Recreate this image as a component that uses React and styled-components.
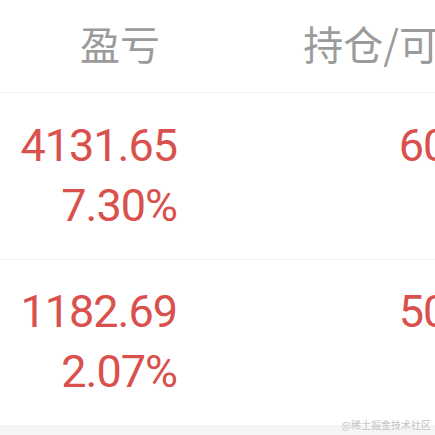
import React from 'react';
import styled, { createGlobalStyle } from 'styled-components';

const GlobalStyle = createGlobalStyle`
    html, body {
        margin: 0;
        padding: 0;
        background: #ffffff;
    }
    body {
        width: 435px;
        height: 435px;
        overflow: hidden;
    }
`;

const Page = styled.div`
    position: relative;
    width: 435px;
    height: 435px;
    overflow: hidden;
    background: #ffffff;
`;

const Table = styled.div`
    width: 520px;
`;

const HeaderRow = styled.div`
    display: grid;
    grid-template-columns: 177px 319px;
    height: 92px;
    align-items: center;
    border-bottom: 1px solid #f0f0f0;
`;

const HeaderCell = styled.div`
    text-align: right;
    padding: 0 17px 6px 0;
    font-family: "Noto Sans CJK SC", "Noto Sans", sans-serif;
    font-size: 40px;
    line-height: 1;
    color: #9b9b9b;
    white-space: nowrap;
`;

const Row = styled.div`
    display: grid;
    grid-template-columns: 177px 319px;
    padding: ${ p => p.top }px 0 23px;
    border-bottom: ${ p => p.last ? 'none' : '1px solid #f0f0f0' };
`;

const Cell = styled.div`
    display: flex;
    flex-direction: column;
    align-items: flex-end;
    font-family: Roboto, "Liberation Sans", sans-serif;
    font-size: 45px;
    line-height: 60px;
    letter-spacing: -1px;
    color: #d9504c;
    white-space: nowrap;
`;

const Footer = styled.div`
    height: 12px;
    background: #f5f5f5;
`;

const Watermark = styled.div`
    position: absolute;
    right: 4px;
    bottom: 4px;
    font-family: "Noto Sans CJK SC", sans-serif;
    font-size: 10px;
    line-height: 12px;
    color: #c4c4c4;
`;

const rows = [
    { amount: '4131.65', rate: '7.30%', hold: '6000', top: 23 },
    { amount: '1182.69', rate: '2.07%', hold: '5000', top: 22 },
];

const App = () => (
    <Page>
        <GlobalStyle />
        <Table>
            <HeaderRow>
                <HeaderCell>盈亏</HeaderCell>
                <HeaderCell>持仓/可用</HeaderCell>
            </HeaderRow>
            { rows.map((row, index) => (
                <Row key={ index } top={ row.top } last={ index === rows.length - 1 }>
                    <Cell>
                        <span>{ row.amount }</span>
                        <span>{ row.rate }</span>
                    </Cell>
                    <Cell>
                        <span>{ row.hold }</span>
                    </Cell>
                </Row>
            )) }
        </Table>
        <Footer />
        <Watermark>@稀土掘金技术社区</Watermark>
    </Page>
);

export default App;
